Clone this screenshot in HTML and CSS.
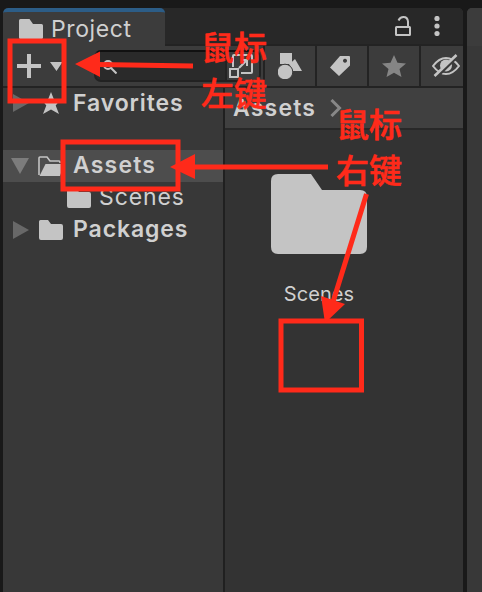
FILE: index.html
```html
<!DOCTYPE html>
<html lang="zh">
<head>
<meta charset="utf-8">
<title>Project</title>
<link rel="stylesheet" href="styles.css">
</head>
<body>
<div class="screen">
  <main class="window">
    <header class="tabs">
      <div class="tab">
        <svg class="folder" width="24" height="20" viewBox="0 0 24 20"><path d="M0 1.5Q0 0 1.5 0H10.5L14 5H22.5Q24 5 24 6.5V18.5Q24 20 22.5 20H1.5Q0 20 0 18.5Z"/></svg>
        <span class="tab-title">Project</span>
      </div>
      <div class="window-actions">
        <svg width="16" height="20" viewBox="0 0 16 20" fill="none" stroke="#c4c4c4" stroke-width="2"><rect x="1" y="11" width="14" height="8" rx=".5"/><path d="M13 11V5.5Q12.500 1 8.500 1Q5 1 3.500 4.500"/></svg>
        <svg width="6" height="20" viewBox="0 0 6 20"><circle cx="3" cy="2.500" r="2.600"/><circle cx="3" cy="10" r="2.600"/><circle cx="3" cy="17.500" r="2.600"/></svg>
      </div>
    </header>
    <div class="toolbar">
      <div class="create">
        <svg width="46" height="24" viewBox="0 0 46 24"><path d="M10 0h4v10h10v4H14v10h-4V14H0v-4h10ZM33 8H45.500L39.500 17Z"/></svg>
      </div>
      <div class="search">
        <svg class="glass" width="14" height="14" viewBox="0 0 14 14" fill="none" stroke="#c4c4c4" stroke-width="2"><circle cx="5" cy="5" r="4"/><path d="M8 8L13.500 13.500"/></svg>
        <div class="search-open">
          <svg width="24" height="24" viewBox="0 0 24 24" fill="none" stroke="#c4c4c4" stroke-width="2"><path d="M4 13V2Q4 1 5 1H22Q23 1 23 2V18Q23 19 22 19H12"/><rect x="1" y="15" width="8" height="8"/><path d="M10 14L18 6M12 6H18V12"/></svg>
        </div>
      </div>
      <div class="tool"><svg width="24" height="26" viewBox="0 0 24 26"><path d="M2 0H14V11H2ZM17 6L24 18H13.500Q14 14 11 11.500Z"/><circle cx="7" cy="19" r="7.800" stroke="#3c3c3c" stroke-width="1"/></svg></div>
      <div class="tool tag"><svg width="20" height="20" viewBox="0 0 20 20"><path fill-rule="evenodd" d="M10 0H19Q20 0 20 1V9.500L9 20L0 11.500ZM15 2.800a2 2 0 1 0 .01 0Z"/></svg></div>
      <div class="tool dim"><svg width="24" height="22" viewBox="0 0 24 22"><path d="M12 0L15.500 7.800L24 8.500L17.500 14L19.500 22L12 17.700L4.500 22L6.500 14L0 8.500L8.500 7.800Z"/></svg></div>
      <div class="tool last"><svg width="28" height="24" viewBox="0 0 28 24"><path d="M1 12Q7 4 14 4Q21 4 27 12Q21 20 14 20Q7 20 1 12Z" fill="none" stroke="#c4c4c4" stroke-width="2"/><circle cx="14" cy="11.500" r="6"/><path d="M4 23.500L26 2" stroke="#3c3c3c" stroke-width="3"/><path d="M2.500 22L24.500 1" stroke="#c4c4c4" stroke-width="2.600"/></svg></div>
    </div>
    <div class="panes">
      <nav class="tree">
        <div class="row favorites">
          <svg class="arrow" width="16" height="18" viewBox="0 0 16 18"><path d="M0 0L16 9L0 18Z"/></svg>
          <svg class="icon" width="24" height="22" viewBox="0 0 24 22"><path d="M12 0L15 7.500L21 8.300L16.700 13.500L20 22L12 17.500L4 22L7.300 13.500L3 8.300L9 7.500Z"/></svg>
          <b>Favorites</b>
        </div>
        <div class="row selected">
          <svg class="arrow down" width="18" height="16" viewBox="0 0 18 16"><path d="M0 0H18L9 16Z"/></svg>
          <svg class="icon" width="26" height="20" viewBox="0 0 26 20"><path d="M1 19V2Q1 1 2 1H9L12 5H21Q22 5 22 6V7" fill="none" stroke="#c4c4c4" stroke-width="1.600"/><path d="M7.500 8H26L22 20H1.500Z"/></svg>
          <b>Assets</b>
        </div>
        <div class="row child">
          <svg class="icon" width="24" height="20" viewBox="0 0 24 20"><path d="M0 1.500Q0 0 1.500 0H9L12 4H22Q24 4 24 6V18Q24 20 22 20H2Q0 20 0 18Z"/></svg>
          <span>Scenes</span>
        </div>
        <div class="row">
          <svg class="arrow" width="16" height="18" viewBox="0 0 16 18"><path d="M0 0L16 9L0 18Z"/></svg>
          <svg class="icon" width="24" height="20" viewBox="0 0 24 20"><path d="M0 1.500Q0 0 1.500 0H9L12 4H22Q24 4 24 6V18Q24 20 22 20H2Q0 20 0 18Z"/></svg>
          <b>Packages</b>
        </div>
      </nav>
      <section class="content">
        <div class="crumbs"><b>Assets</b><svg width="12" height="18" viewBox="0 0 12 18" fill="none" stroke="#888" stroke-width="3"><path d="M1.500 1L9.500 9L1.500 17"/></svg></div>
        <div class="asset">
          <svg width="96" height="80" viewBox="0 0 96 80"><path d="M0 7Q0 0 7 0H40L51 16H89Q96 16 96 23V73Q96 80 89 80H7Q0 80 0 73Z"/></svg>
          <span>Scenes</span>
        </div>
      </section>
    </div>
  </main>
  <aside class="neighbor"><div></div></aside>
  <svg class="marks" width="482" height="592" viewBox="0 0 482 592">
    <g fill="none" stroke="#ff2a1a" stroke-width="5">
      <rect x="10" y="41" width="54" height="60"/>
      <rect x="63" y="142" width="115" height="47"/>
      <rect x="281" y="321" width="80.500" height="69"/>
      <path d="M98 64.500L193 66M192 167H328M366.500 194L333 302"/>
    </g>
    <path fill="#ff2a1a" d="M75 64L100 51.500V77ZM170 167L195 154V179ZM325 323L321 296L345 304Z"/>
  </svg>
  <div class="note left-click">鼠标<br>左键</div>
  <div class="note right-click">鼠标<br>右键</div>
</div>
</body>
</html>
```
FILE: styles.css
```css
* { box-sizing: border-box; }
body { margin: 0; background: #191919; font-family: Inter, "Noto Sans CJK SC", sans-serif; color: #d0d0d0; }
svg { display: block; flex: none; fill: #c4c4c4; }
svg[fill="none"] { fill: none; }
b { font-weight: 600; }
.screen { position: relative; display: flex; gap: 4px; width: 482px; height: 592px; padding: 8px 0 0 3px; overflow: hidden; }
.window { display: flex; flex-direction: column; width: 460px; background: #383838; border-radius: 5px 5px 0 0; overflow: hidden; }
.tabs { display: flex; justify-content: space-between; height: 38px; background: #282828; box-shadow: inset 0 -2px #232323; }
.tab { display: flex; align-items: center; gap: 8px; width: 162px; padding: 0 0 1px 16px; background: #3c3c3c; border-top: 4px solid #2c5d87; border-radius: 5px 5px 0 0; }
.tab-title { font-size: 23px; line-height: 28px; letter-spacing: .6px; }
.window-actions { display: flex; align-items: center; gap: 23px; padding: 0 23px 2px 0; }
.toolbar { display: flex; height: 42px; background: #3c3c3c; border-bottom: 2px solid #232323; }
.create { width: 91px; padding: 8px 0 0 14px; }
.search { display: flex; justify-content: space-between; width: 167px; height: 32px; margin: 4px 2px 0 0; background: #2a2a2a; border: 2px solid #222; border-top-color: #111; border-radius: 7px; }
.glass { margin: 8px 0 0 7px; }
.search-open { width: 34px; padding: 2px 0 0 2px; background: #3c3c3c; border-left: 2px solid #232323; border-radius: 0 5px 5px 0; }
.tool { display: flex; align-items: center; justify-content: center; width: 52px; border-left: 2px solid #232323; }
.tool.tag { padding-right: 4px; }
.tool.last { width: 44px; justify-content: flex-start; padding-left: 11px; }
.dim svg { fill: #858585; }
.panes { display: flex; flex: 1; }
.tree { width: 222px; border-right: 2px solid #202020; }
.row { display: flex; align-items: center; height: 32px; padding-left: 10px; font-size: 23px; line-height: 28px; letter-spacing: .9px; }
.row b, .row span { padding-bottom: 2px; }
.selected b, .crumbs b { letter-spacing: 1.2px; }
.favorites { height: 30px; margin-bottom: 32px; }
.favorites b { padding-bottom: 0; }
.selected { background: #4d4d4d; }
.arrow { fill: #686868; margin-right: 10px; }
.arrow.down { fill: #7c7c7c; margin: 0 9px 0 -2px; }
.icon { margin-right: 10px; }
.selected .icon { margin-right: 9px; }
.child { padding-left: 64px; }
.child .icon { margin-right: 8px; }
.content { flex: 1; background: #333; }
.crumbs { display: flex; align-items: center; gap: 14px; height: 42px; padding-left: 8px; background: #404040; border-bottom: 2px solid #282828; font-size: 23px; }
.asset { display: flex; flex-direction: column; align-items: center; width: 96px; margin: 44px 0 0 46px; font-size: 20px; line-height: 24px; letter-spacing: .1px; }
.asset span { margin-top: 28px; }
.neighbor { flex: 1; background: #383838; border-radius: 5px 0 0 0; overflow: hidden; }
.neighbor div { height: 38px; background: #3c3c3c; }
.marks { position: absolute; left: 0; top: 0; }
.note { position: absolute; color: #ff2a1a; font: 500 33px/46px "Noto Sans CJK SC", sans-serif; -webkit-text-stroke: .6px #ff2a1a; }
.left-click { left: 201px; top: 23px; }
.right-click { left: 336px; top: 100px; }
```
